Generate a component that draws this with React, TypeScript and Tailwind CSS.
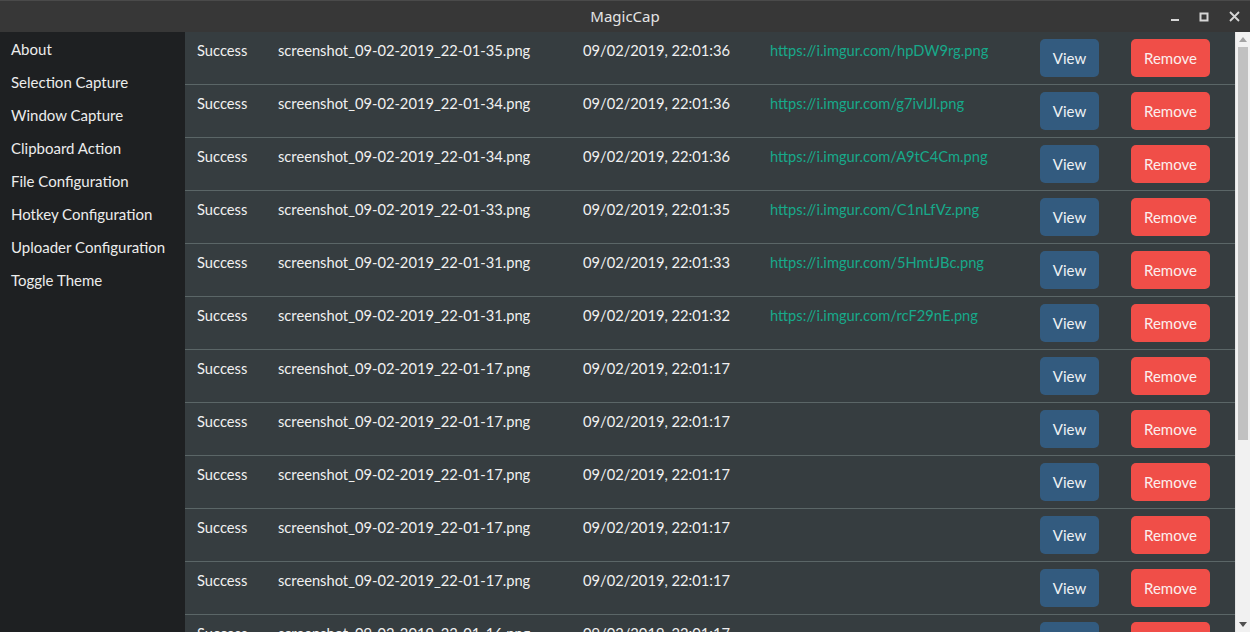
import React from 'react';

type Capture = { file: string; date: string; url?: string };

const captures: Capture[] = [
  { file: 'screenshot_09-02-2019_22-01-35.png', date: '09/02/2019, 22:01:36', url: 'https://i.imgur.com/hpDW9rg.png' },
  { file: 'screenshot_09-02-2019_22-01-34.png', date: '09/02/2019, 22:01:36', url: 'https://i.imgur.com/g7ivlJl.png' },
  { file: 'screenshot_09-02-2019_22-01-34.png', date: '09/02/2019, 22:01:36', url: 'https://i.imgur.com/A9tC4Cm.png' },
  { file: 'screenshot_09-02-2019_22-01-33.png', date: '09/02/2019, 22:01:35', url: 'https://i.imgur.com/C1nLfVz.png' },
  { file: 'screenshot_09-02-2019_22-01-31.png', date: '09/02/2019, 22:01:33', url: 'https://i.imgur.com/5HmtJBc.png' },
  { file: 'screenshot_09-02-2019_22-01-31.png', date: '09/02/2019, 22:01:32', url: 'https://i.imgur.com/rcF29nE.png' },
  { file: 'screenshot_09-02-2019_22-01-17.png', date: '09/02/2019, 22:01:17' },
  { file: 'screenshot_09-02-2019_22-01-17.png', date: '09/02/2019, 22:01:17' },
  { file: 'screenshot_09-02-2019_22-01-17.png', date: '09/02/2019, 22:01:17' },
  { file: 'screenshot_09-02-2019_22-01-17.png', date: '09/02/2019, 22:01:17' },
  { file: 'screenshot_09-02-2019_22-01-17.png', date: '09/02/2019, 22:01:17' },
  { file: 'screenshot_09-02-2019_22-01-16.png', date: '09/02/2019, 22:01:17' },
];

const menu = [
  'About',
  'Selection Capture',
  'Window Capture',
  'Clipboard Action',
  'File Configuration',
  'Hotkey Configuration',
  'Uploader Configuration',
  'Toggle Theme',
];

const App: React.FC = () => {
  return (
    <div className="w-[1250px] h-[632px] flex flex-col bg-[#363d40] overflow-hidden font-['Lato','Noto_Sans',sans-serif]">
      {/* Title bar */}
      <div className="h-8 shrink-0 bg-[#373737] border-t border-[#4a4a4a] flex items-center relative">
        <div className="flex-1 text-center text-[15px] text-[#e4e4e4] font-['Noto_Sans',sans-serif]">MagicCap</div>
        <div className="absolute right-0 top-0 h-full flex items-center">
          <button className="w-[29px] h-full flex items-center justify-center">
            <svg width="10" height="10" viewBox="0 0 10 10"><rect x="1" y="7" width="8" height="2" fill="#d6d6d6" /></svg>
          </button>
          <button className="w-[29px] h-full flex items-center justify-center">
            <svg width="10" height="10" viewBox="0 0 10 10"><rect x="1.5" y="1.5" width="7" height="7" fill="none" stroke="#d6d6d6" strokeWidth="2" /></svg>
          </button>
          <button className="w-[32px] h-full flex items-center justify-center">
            <svg width="11" height="11" viewBox="0 0 11 11"><path d="M1 1L10 10M10 1L1 10" stroke="#d6d6d6" strokeWidth="1.8" /></svg>
          </button>
        </div>
      </div>

      <div className="flex flex-1 min-h-0">
        {/* Sidebar */}
        <div className="w-[185px] shrink-0 bg-[#1e2022] pt-[1px]">
          {menu.map(m => (
            <div key={m} className="h-[33px] pl-[11px] flex items-center text-[15px] text-[#ececec] cursor-pointer">
              {m}
            </div>
          ))}
        </div>

        {/* Captures table */}
        <div className="flex-1 overflow-hidden">
          {captures.map((c, i) => (
            <div
              key={i}
              className="h-[53px] border-b border-[#5b6667] grid grid-cols-[81px_305px_187px_270px_91px_1fr] pl-3 text-[14.7px] text-[#f0f0f0]"
            >
              <div className="pt-[7px]">Success</div>
              <div className="pt-[7px]">{c.file}</div>
              <div className="pt-[7px]">{c.date}</div>
              <div className="pt-[7px]">
                {c.url && <a className="text-[#17a98a]">{c.url}</a>}
              </div>
              <div className="pt-[7px]">
                <button className="h-[38px] w-[59px] rounded-[5px] bg-[#335b7f] text-[#eef2f5] text-[15px]">View</button>
              </div>
              <div className="pt-[7px]">
                <button className="h-[38px] w-[79px] rounded-[5px] bg-[#f04e48] text-[#fbeeee] text-[15px]">Remove</button>
              </div>
            </div>
          ))}
        </div>

        {/* Scrollbar */}
        <div className="w-[15px] shrink-0 bg-[#f1f1f1] flex flex-col border-l border-[#e6e6e6]">
          <div className="h-[15px] flex items-center justify-center">
            <svg width="8" height="5" viewBox="0 0 8 5"><path d="M4 0L8 5H0Z" fill="#a3a3a3" /></svg>
          </div>
          <div className="h-[393px] mx-[2px] bg-[#c1c1c1]" />
          <div className="flex-1" />
          <div className="h-[15px] flex items-center justify-center">
            <svg width="8" height="5" viewBox="0 0 8 5"><path d="M0 0H8L4 5Z" fill="#505050" /></svg>
          </div>
        </div>
      </div>
    </div>
  );
};

export default App;
